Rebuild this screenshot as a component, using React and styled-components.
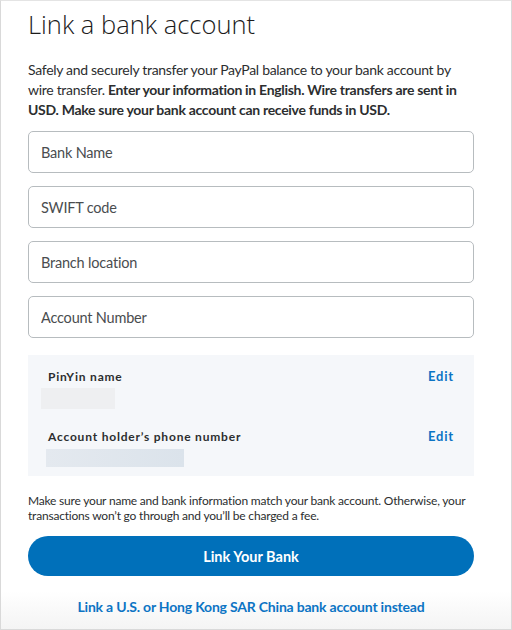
import React from "react";
import styled, { createGlobalStyle } from "styled-components";

const Global = createGlobalStyle`
  html, body {
    margin: 0;
    padding: 0;
    background: #fff;
  }
  * {
    box-sizing: border-box;
  }
`;

const Frame = styled.div`
  width: 512px;
  height: 630px;
  border: 1px solid #d9d9d9;
  border-top-color: #e4e4e4;
  background: linear-gradient(to bottom, #ffffff 0, #ffffff 590px, #f4f4f4 628px);
  padding: 0 37px 0 27px;
  font-family: Lato, "Noto Sans", sans-serif;
  color: #2c2e2f;
  overflow: hidden;
`;

const Title = styled.h1`
  margin: 0;
  padding-top: 5px;
  font-family: "Open Sans", sans-serif;
  font-weight: 300;
  font-size: 25.5px;
  line-height: 36px;
  color: #1b1b1b;
`;

const Intro = styled.p`
  margin: 18px 0 0;
  font-size: 14px;
  letter-spacing: -0.3px;
  line-height: 20px;
  color: #2c2e2f;
  white-space: nowrap;

  strong {
    font-weight: 700;
  }
`;

const Fields = styled.div`
  display: flex;
  flex-direction: column;
  gap: 13px;
  margin-top: 11px;
`;

const Field = styled.input`
  width: 100%;
  height: 42px;
  border: 1px solid #b7bcbf;
  border-radius: 5px;
  padding: 0 12px;
  font-family: Lato, sans-serif;
  font-size: 14.5px;
  letter-spacing: -0.2px;
  color: #2c2e2f;
  background: #fff;

  &::placeholder {
    color: #4a4d4f;
  }
`;

const Panel = styled.div`
  margin-top: 17px;
  background: #f5f7fa;
  padding: 12px 20px 9px 13px;
  display: flex;
  flex-direction: column;
  gap: 18px;
`;

const Row = styled.div`
  display: flex;
  flex-direction: column;
`;

const RowHead = styled.div`
  display: flex;
  justify-content: space-between;
  align-items: center;
  padding-left: 7px;
  height: 18px;
`;

const Label = styled.span`
  font-size: 12px;
  font-weight: 700;
  letter-spacing: 0.8px;
  color: #2c2e2f;
`;

const Edit = styled.a`
  font-size: 13px;
  font-weight: 700;
  letter-spacing: 0.8px;
  color: #0c74c4;
  text-decoration: none;
`;

const Masked = styled.div`
  margin-top: ${(p) => p.$top}px;
  margin-left: ${(p) => p.$left}px;
  width: ${(p) => p.$w}px;
  height: ${(p) => p.$h}px;
  background: ${(p) => p.$bg};
`;

const Note = styled.p`
  margin: 17px 0 0;
  font-size: 12px;
  letter-spacing: -0.2px;
  line-height: 15px;
  color: #2c2e2f;
  white-space: nowrap;
`;

const Primary = styled.button`
  display: block;
  width: 100%;
  height: 40px;
  margin-top: 13px;
  border: none;
  border-radius: 20px;
  background: #0070ba;
  color: #fff;
  font-family: Lato, sans-serif;
  font-size: 14.5px;
  font-weight: 700;
`;

const AltLink = styled.a`
  display: block;
  margin-top: 22px;
  text-align: center;
  font-size: 14px;
  letter-spacing: -0.2px;
  font-weight: 700;
  color: #0c74c4;
  text-decoration: none;
`;

export default function App() {
  return (
    <>
      <Global />
      <Frame>
        <Title>Link a bank account</Title>
        <Intro>
          Safely and securely transfer your PayPal balance to your bank account by
          <br />
          wire transfer.{" "}
          <strong>
            Enter your information in English. Wire transfers are sent in
            <br />
            USD. Make sure your bank account can receive funds in USD.
          </strong>
        </Intro>
        <Fields>
          <Field placeholder="Bank Name" />
          <Field placeholder="SWIFT code" />
          <Field placeholder="Branch location" />
          <Field placeholder="Account Number" />
        </Fields>
        <Panel>
          <Row>
            <RowHead>
              <Label>PinYin name</Label>
              <Edit href="#">Edit</Edit>
            </RowHead>
            <Masked $top={3} $left={0} $w={74} $h={21} $bg="#eeeff1" />
          </Row>
          <Row>
            <RowHead>
              <Label>Account holder’s phone number</Label>
              <Edit href="#">Edit</Edit>
            </RowHead>
            <Masked
              $top={4}
              $left={5}
              $w={138}
              $h={18}
              $bg="linear-gradient(90deg, #e4e9ef, #dbe3eb)"
            />
          </Row>
        </Panel>
        <Note>
          Make sure your name and bank information match your bank account. Otherwise, your
          <br />
          transactions won’t go through and you’ll be charged a fee.
        </Note>
        <Primary>Link Your Bank</Primary>
        <AltLink href="#">Link a U.S. or Hong Kong SAR China bank account instead</AltLink>
      </Frame>
    </>
  );
}
